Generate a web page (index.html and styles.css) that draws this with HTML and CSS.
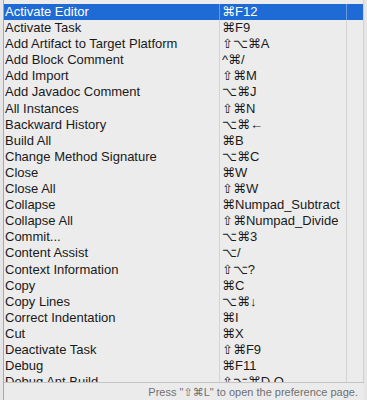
FILE: index.html
```html
<!DOCTYPE html>
<html>
<head>
<meta charset="utf-8">
<link rel="stylesheet" href="styles.css">
</head>
<body>
<div class="panel">
  <div class="list">
    <div class="row sel"><span class="c1">Activate Editor</span><span class="c2">⌘F12</span><span class="c3"></span></div>
    <div class="row"><span class="c1">Activate Task</span><span class="c2">⌘F9</span><span class="c3"></span></div>
    <div class="row"><span class="c1">Add Artifact to Target Platform</span><span class="c2">⇧⌥⌘A</span><span class="c3"></span></div>
    <div class="row"><span class="c1">Add Block Comment</span><span class="c2">^⌘/</span><span class="c3"></span></div>
    <div class="row"><span class="c1">Add Import</span><span class="c2">⇧⌘M</span><span class="c3"></span></div>
    <div class="row"><span class="c1">Add Javadoc Comment</span><span class="c2">⌥⌘J</span><span class="c3"></span></div>
    <div class="row"><span class="c1">All Instances</span><span class="c2">⇧⌘N</span><span class="c3"></span></div>
    <div class="row"><span class="c1">Backward History</span><span class="c2">⌥⌘←</span><span class="c3"></span></div>
    <div class="row"><span class="c1">Build All</span><span class="c2">⌘B</span><span class="c3"></span></div>
    <div class="row"><span class="c1">Change Method Signature</span><span class="c2">⌥⌘C</span><span class="c3"></span></div>
    <div class="row"><span class="c1">Close</span><span class="c2">⌘W</span><span class="c3"></span></div>
    <div class="row"><span class="c1">Close All</span><span class="c2">⇧⌘W</span><span class="c3"></span></div>
    <div class="row"><span class="c1">Collapse</span><span class="c2">⌘Numpad_Subtract</span><span class="c3"></span></div>
    <div class="row"><span class="c1">Collapse All</span><span class="c2">⇧⌘Numpad_Divide</span><span class="c3"></span></div>
    <div class="row"><span class="c1">Commit...</span><span class="c2">⌥⌘3</span><span class="c3"></span></div>
    <div class="row"><span class="c1">Content Assist</span><span class="c2">⌥/</span><span class="c3"></span></div>
    <div class="row"><span class="c1">Context Information</span><span class="c2">⇧⌥?</span><span class="c3"></span></div>
    <div class="row"><span class="c1">Copy</span><span class="c2">⌘C</span><span class="c3"></span></div>
    <div class="row"><span class="c1">Copy Lines</span><span class="c2">⌥⌘↓</span><span class="c3"></span></div>
    <div class="row"><span class="c1">Correct Indentation</span><span class="c2">⌘I</span><span class="c3"></span></div>
    <div class="row"><span class="c1">Cut</span><span class="c2">⌘X</span><span class="c3"></span></div>
    <div class="row"><span class="c1">Deactivate Task</span><span class="c2">⇧⌘F9</span><span class="c3"></span></div>
    <div class="row"><span class="c1">Debug</span><span class="c2">⌘F11</span><span class="c3"></span></div>
    <div class="row"><span class="c1">Debug Ant Build</span><span class="c2">⇧⌥⌘D Q</span><span class="c3"></span></div>
  </div>
  <div class="status">Press "⇧⌘L" to open the preference page.</div>
</div>
</body>
</html>
```
FILE: styles.css
```css
html, body {
  margin: 0;
  padding: 0;
  background: #e6e6e6;
  width: 367px;
  height: 400px;
  overflow: hidden;
}
.panel {
  margin-left: 3px;
  width: 360px;
  height: 400px;
  border-left: 1px solid #a9a9a9;
  display: flex;
  flex-direction: column;
  background: #ececec;
  font-family: "Liberation Sans", Arial, "DejaVu Sans", sans-serif;
}
.list {
  padding-top: 4px;
  height: 382px;
  overflow: hidden;
  border-right: 1px solid #d0d0d0;
  box-sizing: border-box;
}
.row {
  display: grid;
  grid-template-columns: 215px 127px 16px;
  height: 16.1px;
  font-size: 13px;
  line-height: 16px;
  color: #1a1a1a;
  white-space: nowrap;
}
.row span {
  display: block;
  overflow: hidden;
}
.c1 { padding-left: 1px; }
.c2 {
  border-left: 1px solid #d4d4d4;
  padding-left: 2px;
}
.c3 { border-left: 1px solid #d4d4d4; }
.row.sel {
  background: #1f6bd6;
  color: #ffffff;
}
.row.sel .c2, .row.sel .c3 { border-left-color: #6d9be3; }
.status {
  flex: 1;
  border-top: 1px solid #c4c4c4;
  background: #ebebeb;
  font-size: 11px;
  color: #707070;
  text-align: right;
  padding-right: 6px;
  padding-top: 2px;
  line-height: 14px;
}
```
